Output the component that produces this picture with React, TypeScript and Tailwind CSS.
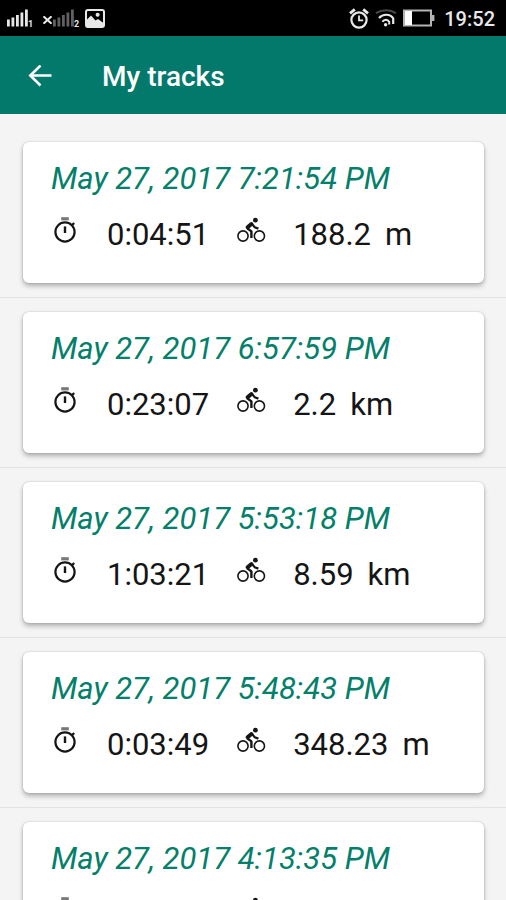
interface Track {
  date: string
  duration: string
  distance: string
  unit: 'm' | 'km'
}

const tracks: Track[] = [
  { date: 'May 27, 2017 7:21:54 PM', duration: '0:04:51', distance: '188.2', unit: 'm' },
  { date: 'May 27, 2017 6:57:59 PM', duration: '0:23:07', distance: '2.2', unit: 'km' },
  { date: 'May 27, 2017 5:53:18 PM', duration: '1:03:21', distance: '8.59', unit: 'km' },
  { date: 'May 27, 2017 5:48:43 PM', duration: '0:03:49', distance: '348.23', unit: 'm' },
  { date: 'May 27, 2017 4:13:35 PM', duration: '0:12:30', distance: '1.4', unit: 'm' },
]

function SignalBars({ className }: { className: string }) {
  return (
    <svg viewBox="0 0 21 18" className={`h-[18px] w-[21px] ${className}`} fill="currentColor" aria-hidden="true">
      <rect x="0" y="10.5" width="2.8" height="7" />
      <rect x="4.5" y="8.5" width="2.8" height="9" />
      <rect x="9" y="6" width="2.8" height="11.5" />
      <rect x="13.5" y="3.5" width="2.8" height="14" />
      <rect x="18" y="0.5" width="2.8" height="17" />
    </svg>
  )
}

function StatusBar() {
  return (
    <div className="flex h-9 shrink-0 items-center justify-between bg-black pr-[11px] pl-[7px] text-[#e8e8e8]">
      <div className="flex items-center">
        <SignalBars className="text-[#e8e8e8]" />
        <span className="w-[5px] self-end text-[9px] leading-[7px] font-bold">1</span>
        <svg viewBox="0 0 9 8" className="mt-1 ml-[10px] h-2 w-[9px]" fill="none" stroke="currentColor" strokeWidth="2" aria-hidden="true">
          <path d="M0.5 0.3l8 7.4M8.5 0.3l-8 7.4" />
        </svg>
        <SignalBars className="ml-px text-[#606060]" />
        <span className="w-[5px] self-end text-[9px] leading-[7px] font-bold">2</span>
        <svg viewBox="0 0 20 19" className="ml-[6px] h-[19px] w-5" aria-hidden="true">
          <rect x="1" y="1" width="18" height="17" rx="2" fill="none" stroke="currentColor" strokeWidth="2" />
          <path d="M2 10.5l4-4 4.5 5 2.5-1.5 5.5 4V17H2z" fill="currentColor" />
          <circle cx="12.6" cy="5.8" r="2" fill="currentColor" />
        </svg>
      </div>
      <div className="flex items-center">
        <svg viewBox="0 0 20 21" className="h-[21px] w-5" fill="none" stroke="currentColor" aria-hidden="true">
          <circle cx="10" cy="12" r="7.6" strokeWidth="2.2" />
          <path d="M10 7.5V12.3h4.2" strokeWidth="1.8" />
          <path d="M1 5.4L5.8 1.4M19 5.4L14.2 1.4" strokeWidth="2.8" />
        </svg>
        <svg viewBox="0 0 22 18" className="ml-[6px] h-[18px] w-[22px]" fill="none" stroke="currentColor" aria-hidden="true">
          <path d="M1 4.2C7 0.2 15 0.2 21 4.2" stroke="#484848" strokeWidth="2" />
          <path d="M4 9C7.8 4.6 15 4.6 18.2 9.4V15" strokeWidth="2.2" />
          <path d="M7.4 12.8C9.2 10 12.6 10 14.2 12.8V15.4" strokeWidth="2" />
          <circle cx="10.6" cy="15.8" r="1.7" fill="currentColor" stroke="none" />
        </svg>
        <svg viewBox="0 0 32 18" className="ml-[6px] h-[18px] w-8" aria-hidden="true">
          <rect x="1" y="1.5" width="27" height="15" fill="none" stroke="#b4b4b4" strokeWidth="2" />
          <rect x="2" y="2" width="7" height="14" fill="#fff" />
          <rect x="29" y="6" width="2.4" height="6" fill="#b4b4b4" />
        </svg>
        <time className="ml-[9px] pt-0.5 text-[20px] leading-6 font-medium">19:52</time>
      </div>
    </div>
  )
}

function StopwatchIcon() {
  return (
    <svg viewBox="0 0 28 28" className="size-7 shrink-0" fill="none" stroke="currentColor" aria-hidden="true">
      <circle cx="14" cy="15" r="9.6" strokeWidth="2.2" />
      <path d="M10.2 1.8h7.6" stroke="#777" strokeWidth="3.2" />
      <path d="M14 9.4v6.6" strokeWidth="2.4" />
      <path d="M20.6 8.6l2.6-2.6" strokeWidth="2.2" />
    </svg>
  )
}

function BikeIcon() {
  return (
    <svg viewBox="0 0 28 28" className="size-7 shrink-0 overflow-visible" fill="none" stroke="currentColor" aria-hidden="true">
      <circle cx="6" cy="19" r="5.1" strokeWidth="1.6" />
      <circle cx="22.4" cy="19" r="5.1" strokeWidth="1.6" />
      <circle cx="18.4" cy="3.2" r="2.4" fill="currentColor" stroke="none" />
      <path d="M10.6 10.2L14.4 7" strokeWidth="4" strokeLinecap="round" />
      <path d="M15 6.8L17.6 10.2L21.4 11.6" strokeWidth="2.2" strokeLinejoin="round" />
      <path d="M10.2 11.2L14.4 14.4V21" strokeWidth="2.4" strokeLinejoin="round" />
    </svg>
  )
}

function TrackCard({ track }: { track: Track }) {
  return (
    <li className="border-b border-[#e2e2e2] px-[22px] pt-3.5 pb-3.5 pl-[23px]">
      <article className="rounded-md bg-white px-7 pt-[19px] pb-[30px] shadow-[0_3px_5px_rgba(0,0,0,0.28),0_0_2px_rgba(0,0,0,0.2)]">
        <h2 className="text-[31px] leading-9 whitespace-nowrap text-[#047f6a] italic">{track.date}</h2>
        <div className="mt-5 flex h-9 items-baseline gap-7 text-[31px] leading-9 whitespace-nowrap text-[#151515]">
          <StopwatchIcon />
          <span>{track.duration}</span>
          <BikeIcon />
          <span className="flex gap-3.5">
            <span>{track.distance}</span>
            <span>{track.unit}</span>
          </span>
        </div>
      </article>
    </li>
  )
}

export default function App() {
  return (
    <div className="flex h-screen flex-col overflow-hidden bg-[#f4f4f4] font-['Roboto',sans-serif]">
      <StatusBar />
      <header className="flex h-[78px] shrink-0 items-center bg-[#03796b] px-7 pt-1 text-white">
        <button type="button" aria-label="Back" className="flex size-6 items-center justify-center">
          <svg viewBox="0 0 24 24" className="size-6" fill="none" stroke="currentColor" strokeWidth="2.6" aria-hidden="true">
            <path d="M23.5 10.5H2.5M12.5 0.5L2.3 10.5L12.5 20.5" />
          </svg>
        </button>
        <h1 className="ml-[50px] text-[28px] leading-9 font-medium">My tracks</h1>
      </header>
      <main className="min-h-0 flex-1 overflow-y-auto pt-3.5 [scrollbar-width:none]">
        <ul>
          {tracks.map(track => (
            <TrackCard key={track.date} track={track} />
          ))}
        </ul>
      </main>
    </div>
  )
}
